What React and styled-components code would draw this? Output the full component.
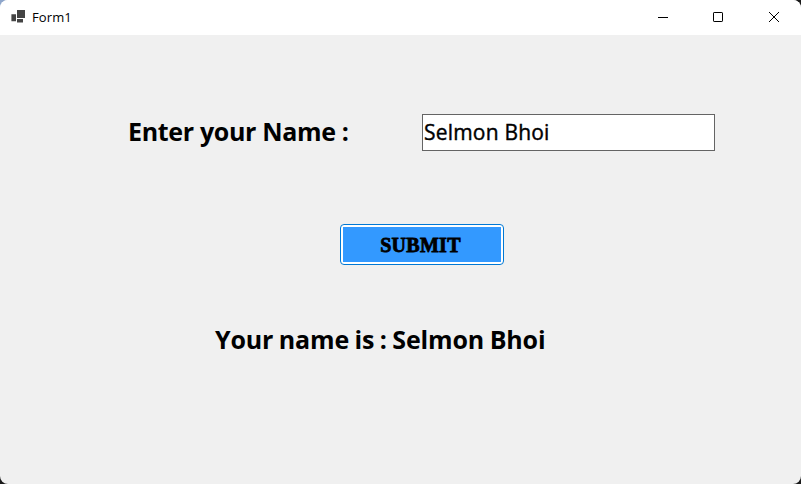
import React, { useState } from "react";
import styled, { createGlobalStyle } from "styled-components";

const GlobalStyle = createGlobalStyle`
  * { box-sizing: border-box; }
  html, body { margin: 0; padding: 0; }
  body {
    width: 801px;
    height: 484px;
    overflow: hidden;
    background: linear-gradient(90deg, #8ea6cb 0 50%, #1a1a1a 50%) top / 100% 50% no-repeat, #1a1a1a;
  }
`;

const Window = styled.main`
  width: 801px;
  height: 484px;
  display: flex;
  flex-direction: column;
  overflow: hidden;
  border-radius: 8px;
  background: #f0f0f0;
  color: #000;
  font-family: "Open Sans", "Noto Sans", sans-serif;
`;

const TitleBar = styled.header`
  flex: none;
  height: 35px;
  display: flex;
  align-items: center;
  padding-left: 11px;
  background: #fff;
`;

const Title = styled.h1`
  margin: 0 auto 0 6px;
  font-size: 13px;
  line-height: 35px;
  font-weight: 400;
  letter-spacing: 0.1px;
`;

const CaptionButton = styled.button`
  width: ${(p) => p.$width};
  height: 35px;
  display: flex;
  align-items: center;
  justify-content: center;
  padding: 0 0 1px;
  border: 0;
  background: none;
  color: #000;
`;

const Form = styled.form`
  flex: 1;
  display: flex;
  flex-direction: column;
  padding-top: 79px;
`;

const NameRow = styled.div`
  height: 37px;
  display: flex;
  align-items: center;
  padding-left: 128px;
`;

const Label = styled.label`
  width: 294px;
  padding-bottom: 2px;
  font-size: 25px;
  line-height: 35px;
  font-weight: 700;
  letter-spacing: -0.33px;
  white-space: nowrap;
`;

const NameInput = styled.input`
  width: 293px;
  height: 37px;
  padding: 0 0 1px 1px;
  border: 1px solid #646464;
  border-radius: 0;
  outline: 0;
  background: #fff;
  color: #000;
  font: 500 21px "Open Sans", "Noto Sans", sans-serif;
  letter-spacing: 0.2px;
  -webkit-text-stroke: 0.4px #000;
`;

const SubmitButton = styled.button`
  width: 164px;
  height: 41px;
  margin: 73px 0 0 340px;
  padding: 2px;
  border: 1px solid #0078d4;
  border-radius: 4px;
  background: #fff;
`;

const SubmitFace = styled.span`
  display: flex;
  align-items: center;
  justify-content: center;
  width: 158px;
  height: 35px;
  padding: 2px 3px 0 0;
  background: #3399ff;
  color: #000;
  font: 700 20px "Liberation Serif", serif;
  letter-spacing: 0.3px;
  -webkit-text-stroke: 0.8px #000;
`;

const Result = styled.output`
  display: block;
  margin: 56px 0 0 215px;
  font-size: 25px;
  line-height: 37px;
  font-weight: 700;
  letter-spacing: -0.13px;
  word-spacing: -0.9px;
  white-space: nowrap;
`;

function AppIcon() {
  return (
    <svg width="15" height="15" viewBox="0 0 15 15">
      <path d="M6 0h8v8H6zM0.4 4.3h4.6v7H0.4zM6 9h6v3.4H6z" fill="#444" />
    </svg>
  );
}

function CaptionIcon({ kind }) {
  return (
    <svg width="12" height="12" viewBox="0 0 12 12" fill="none" stroke="currentColor">
      {kind === "minimize" && <path d="M1 6.5h10" />}
      {kind === "maximize" && <rect x="1.5" y="1.5" width="9" height="9" rx="0.6" />}
      {kind === "close" && <path d="M1 1l10 10M11 1L1 11" />}
    </svg>
  );
}

const captionButtons = [
  { kind: "minimize", width: "52px" },
  { kind: "maximize", width: "58px" },
  { kind: "close", width: "54px" },
];

export default function App() {
  const [name, setName] = useState("Selmon Bhoi");
  const [submitted, setSubmitted] = useState("Selmon Bhoi");
  const submit = (event) => {
    event.preventDefault();
    setSubmitted(name);
  };
  return (
    <>
      <GlobalStyle />
      <Window>
        <TitleBar>
          <AppIcon />
          <Title>Form1</Title>
          {captionButtons.map(({ kind, width }) => (
            <CaptionButton key={kind} $width={width} aria-label={kind}>
              <CaptionIcon kind={kind} />
            </CaptionButton>
          ))}
        </TitleBar>
        <Form onSubmit={submit}>
          <NameRow>
            <Label htmlFor="name">Enter your Name :</Label>
            <NameInput id="name" value={name} onChange={(e) => setName(e.target.value)} />
          </NameRow>
          <SubmitButton type="submit">
            <SubmitFace>SUBMIT</SubmitFace>
          </SubmitButton>
          <Result>Your name is : {submitted}</Result>
        </Form>
      </Window>
    </>
  );
}
